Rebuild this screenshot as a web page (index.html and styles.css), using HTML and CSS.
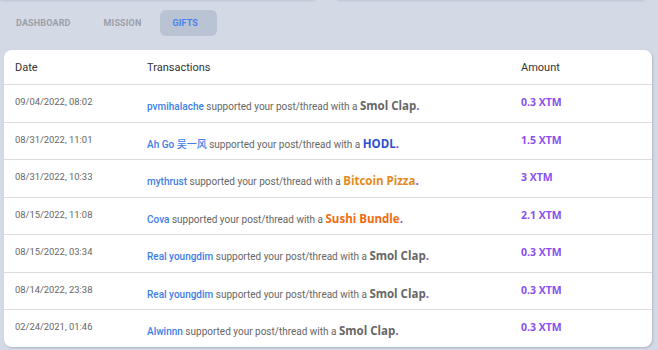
FILE: index.html
```html
<!DOCTYPE html>
<html>
<head>
    <title>Gifts</title>
    <link rel="stylesheet" href="styles.css">
</head>
<body>
    <div class="top-cards">
        <div class="top-card"></div>
        <div class="top-card right"></div>
    </div>

    <div class="tabs">
        <div class="tab">Dashboard</div>
        <div class="tab">Mission</div>
        <div class="tab active">Gifts</div>
    </div>

    <div class="card">
        <div class="row head">
            <div class="col-date">Date</div>
            <div class="col-tx">Transactions</div>
            <div class="col-amount">Amount</div>
        </div>

        <div class="row">
            <div class="col-date">09/04/2022, 08:02</div>
            <div class="col-tx"><span class="user">pvmihalache</span> supported your post/thread with a <span class="gift grey">Smol Clap</span><span class="dot">.</span></div>
            <div class="col-amount">0.3 XTM</div>
        </div>
        <div class="row">
            <div class="col-date">08/31/2022, 11:01</div>
            <div class="col-tx"><span class="user">Ah Go 吴一风</span> supported your post/thread with a <span class="gift blue">HODL</span><span class="dot">.</span></div>
            <div class="col-amount">1.5 XTM</div>
        </div>
        <div class="row">
            <div class="col-date">08/31/2022, 10:33</div>
            <div class="col-tx"><span class="user">mythrust</span> supported your post/thread with a <span class="gift orange">Bitcoin Pizza</span><span class="dot">.</span></div>
            <div class="col-amount">3 XTM</div>
        </div>
        <div class="row">
            <div class="col-date">08/15/2022, 11:08</div>
            <div class="col-tx"><span class="user">Cova</span> supported your post/thread with a <span class="gift orange-red">Sushi Bundle</span><span class="dot">.</span></div>
            <div class="col-amount">2.1 XTM</div>
        </div>
        <div class="row">
            <div class="col-date">08/15/2022, 03:34</div>
            <div class="col-tx"><span class="user">Real youngdim</span> supported your post/thread with a <span class="gift grey">Smol Clap</span><span class="dot">.</span></div>
            <div class="col-amount">0.3 XTM</div>
        </div>
        <div class="row">
            <div class="col-date">08/14/2022, 23:38</div>
            <div class="col-tx"><span class="user">Real youngdim</span> supported your post/thread with a <span class="gift grey">Smol Clap</span><span class="dot">.</span></div>
            <div class="col-amount">0.3 XTM</div>
        </div>
        <div class="row">
            <div class="col-date">02/24/2021, 01:46</div>
            <div class="col-tx"><span class="user">Alwinnn</span> supported your post/thread with a <span class="gift grey">Smol Clap</span><span class="dot">.</span></div>
            <div class="col-amount">0.3 XTM</div>
        </div>
    </div>
</body>
</html>
```

FILE: styles.css
```css
body, html {
    margin: 0;
    height: 100%;
    overflow: hidden;
    background: #d3dae6;
    font-family: 'Roboto', 'Noto Sans CJK SC', sans-serif;
}

.top-cards {
    display: flex;
    gap: 21px;
    height: 0;
    padding: 0 13px 0 0;
}

.top-card {
    width: 316px;
    height: 2px;
    margin-top: -2px;
    background: #d3dae6;
    border-radius: 0 0 6px 6px;
    box-shadow: 0 1px 2px rgba(120, 130, 150, 0.25);
}

.top-card.right {
    width: 308px;
}

.tabs {
    display: flex;
    align-items: center;
    padding: 10px 0 0 4px;
    height: 26px;
}

.tab {
    text-transform: uppercase;
    font-size: 9px;
    font-weight: 700;
    color: #9aa0a8;
    padding: 0 12px;
    height: 26px;
    line-height: 26px;
    margin-right: 9px;
    border-radius: 6px;
    letter-spacing: 0.15px;
}

.tab.active {
    background: #b9c3d3;
    color: #4a80ef;
    width: 33px;
    margin-left: -2px;
}

.card {
    margin: 14px 6px 0 4px;
    background: #fff;
    border-radius: 8px;
    box-shadow: 1px 1px 2px rgba(110, 120, 140, 0.35);
    overflow: hidden;
}

.row {
    display: flex;
    height: 37.5px;
    border-top: 1px solid #dcdcdc;
    box-sizing: border-box;
    font-size: 10px;
    color: #666;
}

.row.head {
    border-top: none;
    height: 34px;
    align-items: center;
    font-size: 11px;
    color: #333;
}

.col-date {
    width: 132px;
    padding-left: 11px;
}

.col-tx {
    width: 374px;
}

.row:not(.head) .col-date {
    padding-top: 11px;
    font-size: 9.4px;
}

.row:not(.head) .col-tx {
    padding-top: 13px;
}

.row:not(.head) .col-amount {
    padding-top: 10px;
    font-family: 'Open Sans', sans-serif;
    font-weight: 700;
    font-size: 10.5px;
    color: #8a4ff0;
}

.user {
    color: #3d7ee8;
    font-weight: 500;
}

.gift {
    font-family: 'Open Sans', sans-serif;
    font-weight: 700;
    font-size: 11.5px;
}

.gift.grey {
    color: #666;
}

.gift.blue {
    color: #2a52d0;
}

.gift.orange {
    color: #e48a1c;
}

.gift.orange-red {
    color: #f26b12;
}

.dot {
    font-family: 'Open Sans', sans-serif;
    font-weight: 700;
    font-size: 11.5px;
    color: #7b55e8;
}
```
